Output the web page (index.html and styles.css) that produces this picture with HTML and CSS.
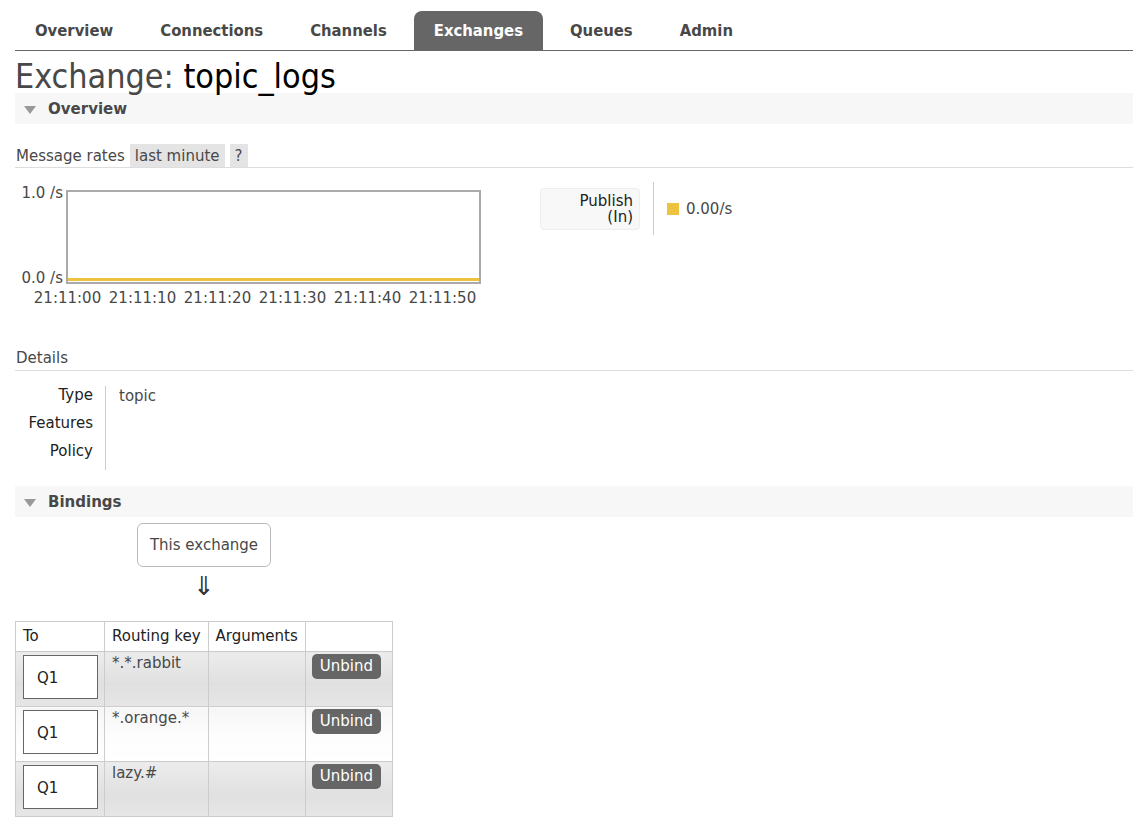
FILE: index.html
```html
<!DOCTYPE html>
<html>
<head>
<meta charset="utf-8">
<link rel="stylesheet" href="styles.css">
</head>
<body>
<div class="page">
  <ul class="nav">
    <li class="tab">Overview</li>
    <li class="tab">Connections</li>
    <li class="tab">Channels</li>
    <li class="tab active">Exchanges</li>
    <li class="tab">Queues</li>
    <li class="tab">Admin</li>
  </ul>

  <h1 class="title"><span class="title-label">Exchange:</span> <b class="title-name">topic_logs</b></h1>

  <div class="section-head"><span class="tri"></span>Overview</div>

  <div class="subhead">
    <span>Message rates</span>
    <span class="pill">last minute</span>
    <span class="pill q">?</span>
  </div>

  <div class="rates">
    <div class="chart">
      <div class="chart-row">
        <div class="yaxis"><span>1.0 /s</span><span>0.0 /s</span></div>
        <div class="plot"><div class="series"></div></div>
      </div>
      <div class="xaxis">
        <span>21:11:00</span><span>21:11:10</span><span>21:11:20</span><span>21:11:30</span><span>21:11:40</span><span>21:11:50</span>
      </div>
    </div>
    <div class="legend">
      <div class="legend-label"><div>Publish</div><div>(In)</div></div>
      <div class="legend-value"><span class="swatch"></span>0.00/s</div>
    </div>
  </div>

  <div class="subhead details-head"><span>Details</span></div>

  <div class="facts">
    <div class="facts-keys">
      <div class="fk">Type</div>
      <div class="fk">Features</div>
      <div class="fk">Policy</div>
    </div>
    <div class="facts-vals">
      <div class="fv">topic</div>
    </div>
  </div>

  <div class="section-head bind-head"><span class="tri"></span>Bindings</div>

  <div class="flow">
    <div class="this-ex">This exchange</div>
    <div class="arrow">⇓</div>
  </div>

  <table class="bindings">
    <thead>
      <tr><th class="c1">To</th><th class="c2">Routing key</th><th class="c3">Arguments</th><th class="c4"></th></tr>
    </thead>
    <tbody>
      <tr class="alt1">
        <td><div class="qbox">Q1</div></td>
        <td class="key">*.*.rabbit</td>
        <td></td>
        <td class="act"><span class="btn">Unbind</span></td>
      </tr>
      <tr class="alt2">
        <td><div class="qbox">Q1</div></td>
        <td class="key">*.orange.*</td>
        <td></td>
        <td class="act"><span class="btn">Unbind</span></td>
      </tr>
      <tr class="alt1">
        <td><div class="qbox">Q1</div></td>
        <td class="key">lazy.#</td>
        <td></td>
        <td class="act"><span class="btn">Unbind</span></td>
      </tr>
    </tbody>
  </table>
</div>
</body>
</html>
```

FILE: styles.css
```css
html, body {
  margin: 0;
  padding: 0;
  background: #fff;
}
body {
  font-family: "DejaVu Sans", Verdana, sans-serif;
  font-size: 15px;
  color: #484848;
}
.page {
  padding: 11px 0 0 15px;
}
.nav {
  list-style: none;
  margin: 0;
  padding: 0;
  display: flex;
  gap: 7px;
  border-bottom: 1px solid #666;
}
.tab {
  font-family: "DejaVu Sans Condensed", "DejaVu Sans", "Liberation Sans Narrow", sans-serif;
  font-stretch: condensed;
  font-weight: bold;
  font-size: 16.5px;
  color: #484848;
  height: 39px;
  line-height: 39px;
  padding: 0 20px;
  border-radius: 8px 8px 0 0;
}
.tab.active {
  background: #666;
  color: #fff;
}
.title {
  margin: 9px 0 0 0;
  font-family: "DejaVu Sans Condensed", "DejaVu Sans", sans-serif;
  font-stretch: condensed;
  font-weight: normal;
  font-size: 33.8px;
  line-height: 34px;
  height: 33px;
}
.title-label {
  color: #484848;
}
.title-name {
  font-weight: normal;
  color: #000;
}
.section-head {
  background: #f7f7f7;
  height: 31px;
  line-height: 31px;
  display: flex;
  align-items: center;
  font-family: "DejaVu Sans Condensed", "DejaVu Sans", sans-serif;
  font-stretch: condensed;
  font-weight: bold;
  font-size: 16.7px;
  color: #484848;
}
.tri {
  width: 0;
  height: 0;
  border-left: 6px solid transparent;
  border-right: 6px solid transparent;
  border-top: 8px solid #999;
  margin: 2px 12px 0 9px;
}
.subhead {
  margin-top: 20px;
  display: flex;
  align-items: center;
  gap: 5px;
  border-bottom: 1px solid #ddd;
  height: 23px;
  font-size: 15px;
  color: #484848;
  padding-left: 1px;
}
.pill {
  background: #e4e4e4;
  height: 23px;
  line-height: 25px;
  padding: 0 5px;
}
.rates {
  display: flex;
  align-items: flex-start;
  margin-top: 22px;
}
.chart {
  width: 468px;
}
.chart-row {
  display: flex;
  gap: 3px;
}
.yaxis {
  width: 48px;
  height: 96px;
  display: flex;
  flex-direction: column;
  justify-content: space-between;
  align-items: flex-end;
  font-size: 15px;
  line-height: 15px;
  color: #484848;
  margin-top: -4px;
}
.yaxis span:last-child {
  margin-bottom: -4px;
}
.plot {
  width: 411px;
  height: 90px;
  border: 2px solid #aaa;
  display: flex;
  align-items: flex-end;
}
.series {
  width: 100%;
  height: 3px;
  background: #edc240;
  margin-bottom: 1px;
}
.xaxis {
  display: flex;
  margin-left: 15px;
  margin-top: 6px;
  font-size: 15px;
  line-height: 16px;
  color: #484848;
}
.xaxis span {
  width: 75px;
  text-align: center;
}
.legend {
  display: flex;
  align-items: center;
  margin-left: 57px;
  margin-top: -8px;
}
.legend-label {
  width: 100px;
  height: 42px;
  box-sizing: border-box;
  background: #f8f8f8;
  border: 1px solid #eee;
  border-radius: 4px;
  text-align: right;
  padding: 4px 6px 0 0;
  font-size: 15px;
  line-height: 16px;
  color: #222;
  margin-right: 13px;
}
.legend-value {
  border-left: 1px solid #ccc;
  height: 53px;
  display: flex;
  align-items: center;
  padding-left: 13px;
  font-size: 15px;
  color: #484848;
}
.swatch {
  width: 12px;
  height: 12px;
  background: #edc240;
  margin-right: 7px;
}
.details-head {
  margin-top: 40px;
  height: 24px;
  gap: 0;
}
.facts {
  display: flex;
  margin-top: 15px;
}
.facts-keys {
  width: 78px;
  border-right: 1px solid #ccc;
  padding: 0 12px 0 0;
  text-align: right;
  font-size: 15px;
  color: #222;
}
.fk {
  height: 28px;
  line-height: 18px;
}
.facts-vals {
  padding: 1px 0 0 13px;
  font-size: 15px;
  color: #484848;
}
.fv {
  line-height: 18px;
}
.bind-head {
  margin-top: 16px;
  height: 31px;
}
.flow {
  width: 378px;
  display: flex;
  flex-direction: column;
  align-items: center;
  margin-top: 6px;
}
.this-ex {
  border: 1px solid #bbb;
  border-radius: 6px;
  width: 134px;
  height: 44px;
  box-sizing: border-box;
  display: flex;
  align-items: center;
  justify-content: center;
  font-size: 15px;
  color: #484848;
}
.arrow {
  font-size: 26px;
  line-height: 30px;
  margin-top: 4px;
  color: #333;
}
.bindings {
  margin-top: 20px;
  border-collapse: collapse;
  font-size: 15px;
  color: #222;
}
.bindings th, .bindings td {
  border: 1px solid #ccc;
  text-align: left;
  vertical-align: top;
  padding: 0;
}
.bindings th {
  font-weight: normal;
  white-space: nowrap;
  height: 29px;
  line-height: 29px;
  padding: 0 7px;
  background: #fff;
}
.bindings .c1 { width: 74px; }
.bindings .c2 { width: 87px; }
.bindings .c3 { width: 82px; }
.bindings .c4 { width: 72px; }
.bindings td {
  height: 55px;
  box-sizing: border-box;
}
.alt1 td {
  background: linear-gradient(#ececec, #e0e0e0 60%, #e6e6e6);
}
.alt2 td {
  background: linear-gradient(#f6f6f6, #fdfdfd 60%, #fff);
}
.qbox {
  margin: 3px 0 0 7px;
  width: 75px;
  height: 44px;
  box-sizing: border-box;
  border: 1px solid #666;
  background: #fff;
  padding-left: 13px;
  line-height: 44px;
  color: #222;
}
.bindings td.key {
  padding: 2px 7px 0 7px;
  color: #484848;
}
.bindings td.act {
  padding: 2px 0 0 6px;
}
.btn {
  display: inline-block;
  background: #666;
  color: #fff;
  border-radius: 5px;
  padding: 0 8px;
  height: 25px;
  line-height: 25px;
  font-size: 15px;
}
```
